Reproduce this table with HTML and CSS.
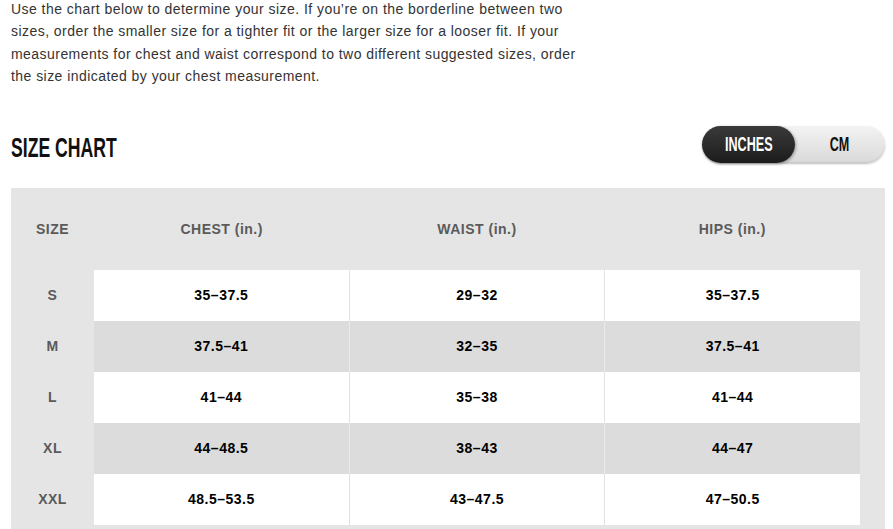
FILE: index.html
```html
<!DOCTYPE html>
<html>
<head>
<meta charset="utf-8">
<link rel="stylesheet" href="styles.css">
</head>
<body>
<div class="page">
  <p class="intro">Use the chart below to determine your size. If you’re on the borderline between two sizes, order the smaller size for a tighter fit or the larger size for a looser fit. If your measurements for chest and waist correspond to two different suggested sizes, order the size indicated by your chest measurement.</p>
  <div class="title-row">
    <h2 class="title"><span class="cond">SIZE CHART</span></h2>
    <div class="toggle">
      <div class="opt active"><span class="cond">INCHES</span></div>
      <div class="opt"><span class="cond">CM</span></div>
    </div>
  </div>
  <div class="chart">
    <div class="row head">
      <div class="size">SIZE</div>
      <div class="cell">CHEST (in.)</div>
      <div class="cell">WAIST (in.)</div>
      <div class="cell">HIPS (in.)</div>
    </div>
    <div class="row light">
      <div class="size">S</div>
      <div class="cell">35–37.5</div>
      <div class="cell">29–32</div>
      <div class="cell">35–37.5</div>
    </div>
    <div class="row dark">
      <div class="size">M</div>
      <div class="cell">37.5–41</div>
      <div class="cell">32–35</div>
      <div class="cell">37.5–41</div>
    </div>
    <div class="row light">
      <div class="size">L</div>
      <div class="cell">41–44</div>
      <div class="cell">35–38</div>
      <div class="cell">41–44</div>
    </div>
    <div class="row dark">
      <div class="size">XL</div>
      <div class="cell">44–48.5</div>
      <div class="cell">38–43</div>
      <div class="cell">44–47</div>
    </div>
    <div class="row light">
      <div class="size">XXL</div>
      <div class="cell">48.5–53.5</div>
      <div class="cell">43–47.5</div>
      <div class="cell">47–50.5</div>
    </div>
  </div>
</div>
</body>
</html>
```

FILE: styles.css
```css
html, body {
  margin: 0;
  padding: 0;
  background: #fff;
}
body {
  font-family: "Liberation Sans", Arial, sans-serif;
  overflow: hidden;
}
.page {
  width: 874px;
  padding-left: 11px;
}
.intro {
  margin: -2px 0 0 0;
  width: 568px;
  font-size: 14px;
  line-height: 22.4px;
  letter-spacing: 0.45px;
  color: #333;
}
.title-row {
  display: flex;
  justify-content: space-between;
  align-items: center;
  margin-top: 38px;
  height: 38px;
}
.cond {
  display: inline-block;
  transform: scaleX(0.63);
  transform-origin: left center;
  font-weight: bold;
}
.title {
  margin: 0;
  font-size: 28px;
  line-height: 28px;
  color: #111;
  position: relative;
  top: 3px;
  width: 120px;
  white-space: nowrap;
}
.toggle {
  display: flex;
  width: 183px;
  height: 37px;
  border-radius: 19px;
  background: linear-gradient(#f3f3f3, #d9d9d9);
  box-shadow: 0 1px 2px rgba(0,0,0,0.25), inset 0 -1px 1px rgba(0,0,0,0.08);
  margin-top: -1px;
}
.opt {
  flex: 0 0 auto;
  display: flex;
  align-items: center;
  justify-content: center;
  font-size: 20px;
  color: #111;
  width: 90px;
}
.opt .cond {
  transform-origin: center center;
}
.opt.active {
  width: 93px;
  border-radius: 19px;
  background: linear-gradient(#3a3a3a, #1c1c1c);
  color: #fff;
  box-shadow: 1px 1px 3px rgba(0,0,0,0.35);
}
.chart {
  margin-top: 24px;
  width: 849px;
  padding: 0 25px 5px 0;
  background: #e5e5e5;
}
.row {
  display: flex;
  height: 51px;
  font-size: 14px;
  font-weight: bold;
  letter-spacing: 0.5px;
}
.row.head {
  height: 82px;
  color: #5a5a5a;
}
.size {
  width: 83px;
  flex: 0 0 83px;
  display: flex;
  align-items: center;
  justify-content: center;
  color: #5a5a5a;
}
.cell {
  flex: 1 1 0;
  display: flex;
  align-items: center;
  justify-content: center;
  color: #000;
}
.row.head .cell {
  color: #5a5a5a;
}
.row.light .cell {
  background: #fff;
}
.row.dark .cell {
  background: #dcdcdc;
}
.row.light .cell + .cell {
  border-left: 1px solid #e2e2e2;
}
.row.dark .cell + .cell {
  border-left: 1px solid #ebebeb;
}
```
